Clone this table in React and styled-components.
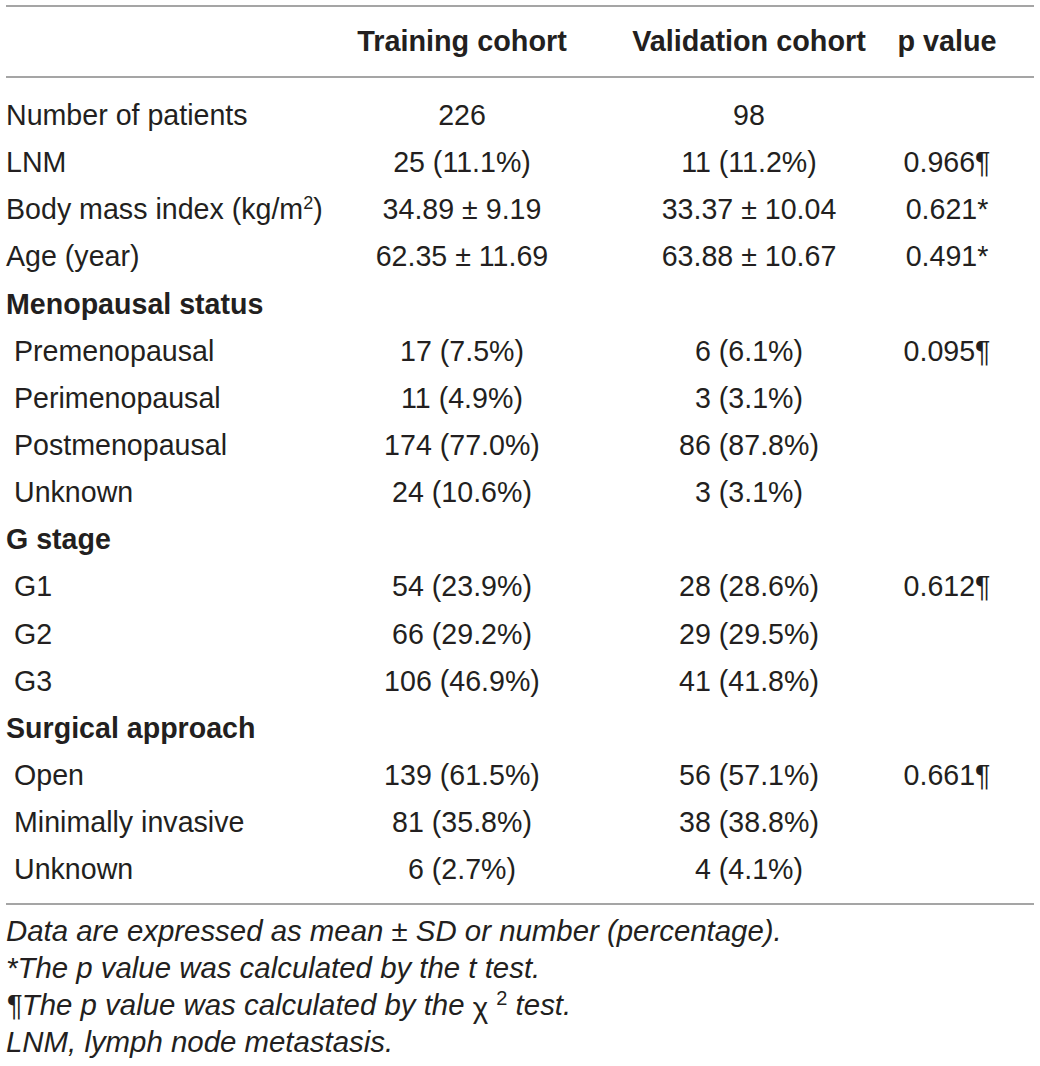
import React from "react";
import styled, { createGlobalStyle } from "styled-components";

const GlobalStyle = createGlobalStyle`
  body {
    margin: 0;
    background: #ffffff;
    font-family: "Liberation Sans", Arial, sans-serif;
    color: #231f20;
  }
`;

const Page = styled.div`
  padding: 5px 0 0 6px;
  width: 1028px;
`;

const Table = styled.div`
  border-top: 2px solid #a5a5a5;
  border-bottom: 2px solid #a5a5a5;
  padding-bottom: 10px;
`;

const Grid = styled.div`
  display: grid;
  grid-template-columns: 315px 282px 292px 104px;
  font-size: 28.6px;
  white-space: nowrap;
`;

const HeaderRow = styled(Grid)`
  height: 69px;
  align-items: center;
  font-weight: 700;
  font-size: 28.8px;
  border-bottom: 2px solid #a5a5a5;
  margin-bottom: 14px;
`;

const Row = styled(Grid)`
  height: 47.15px;
  align-items: center;
`;

const Cell = styled.div`
  text-align: center;
`;

const Label = styled.div`
  padding-left: ${(p) => (p.$indent ? "8px" : "0")};
  font-weight: ${(p) => (p.$section ? 700 : 400)};
`;

const Sup = styled.sup`
  font-size: ${(p) => (p.$big ? "20px" : "18px")};
  font-style: normal;
  line-height: 0;
  vertical-align: 10px;
`;

const Notes = styled.div`
  padding-top: 7px;
  font-size: 29.4px;
  line-height: 37px;
  font-style: italic;
  white-space: nowrap;
`;

const Chi = styled.span`
  font-style: normal;
  position: relative;
  top: 3px;
`;

const rows = [
  { label: "Number of patients", a: "226", b: "98", p: "" },
  { label: "LNM", a: "25 (11.1%)", b: "11 (11.2%)", p: "0.966¶" },
  {
    label: (
      <>
        Body mass index (kg/m<Sup>2</Sup>)
      </>
    ),
    a: "34.89 ± 9.19",
    b: "33.37 ± 10.04",
    p: "0.621*",
  },
  { label: "Age (year)", a: "62.35 ± 11.69", b: "63.88 ± 10.67", p: "0.491*" },
  { label: "Menopausal status", section: true },
  { label: "Premenopausal", sub: true, a: "17 (7.5%)", b: "6 (6.1%)", p: "0.095¶" },
  { label: "Perimenopausal", sub: true, a: "11 (4.9%)", b: "3 (3.1%)", p: "" },
  { label: "Postmenopausal", sub: true, a: "174 (77.0%)", b: "86 (87.8%)", p: "" },
  { label: "Unknown", sub: true, a: "24 (10.6%)", b: "3 (3.1%)", p: "" },
  { label: "G stage", section: true },
  { label: "G1", sub: true, a: "54 (23.9%)", b: "28 (28.6%)", p: "0.612¶" },
  { label: "G2", sub: true, a: "66 (29.2%)", b: "29 (29.5%)", p: "" },
  { label: "G3", sub: true, a: "106 (46.9%)", b: "41 (41.8%)", p: "" },
  { label: "Surgical approach", section: true },
  { label: "Open", sub: true, a: "139 (61.5%)", b: "56 (57.1%)", p: "0.661¶" },
  { label: "Minimally invasive", sub: true, a: "81 (35.8%)", b: "38 (38.8%)", p: "" },
  { label: "Unknown", sub: true, a: "6 (2.7%)", b: "4 (4.1%)", p: "" },
];

export default function App() {
  return (
    <Page>
      <GlobalStyle />
      <Table>
        <HeaderRow>
          <div />
          <Cell>Training cohort</Cell>
          <Cell>Validation cohort</Cell>
          <Cell>p value</Cell>
        </HeaderRow>
        {rows.map((r, i) => (
          <Row key={i}>
            <Label $indent={r.sub} $section={r.section}>
              {r.label}
            </Label>
            <Cell>{r.a}</Cell>
            <Cell>{r.b}</Cell>
            <Cell>{r.p}</Cell>
          </Row>
        ))}
      </Table>
      <Notes>
        <div>Data are expressed as mean ± SD or number (percentage).</div>
        <div>*The p value was calculated by the t test.</div>
        <div>
          ¶The p value was calculated by the <Chi>χ</Chi> <Sup $big>2</Sup> test.
        </div>
        <div>LNM, lymph node metastasis.</div>
      </Notes>
    </Page>
  );
}
